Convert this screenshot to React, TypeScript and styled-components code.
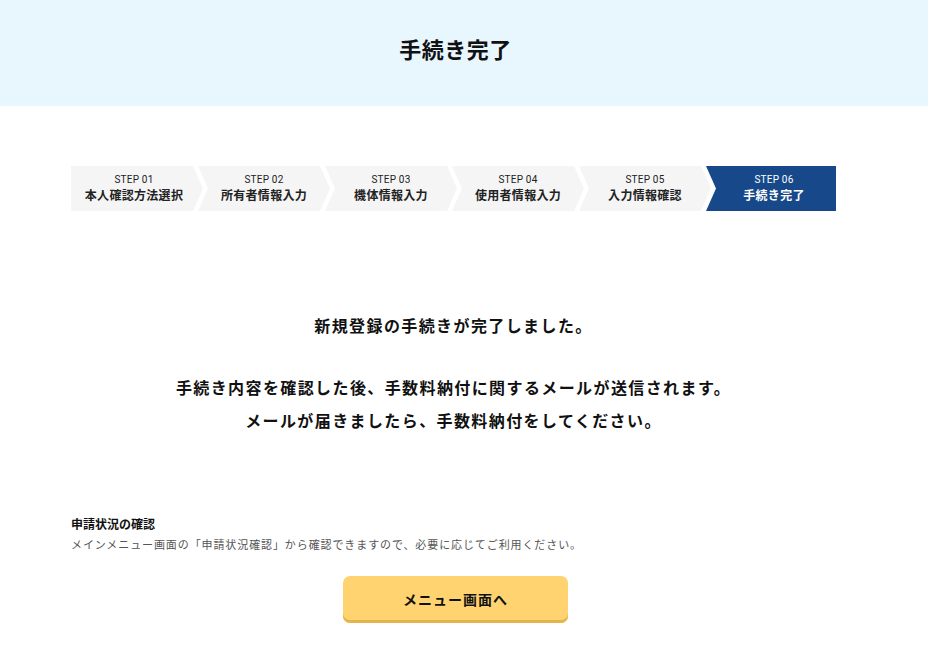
import React from "react";
import styled, { createGlobalStyle } from "styled-components";

const Global = createGlobalStyle`
  html, body { margin: 0; padding: 0; background: #fff; }
  body { font-family: "Noto Sans CJK JP", "Noto Sans", sans-serif; color: #222; }
`;

const Page = styled.div`
  width: 928px;
  display: flex;
  flex-direction: column;
`;

const Header = styled.header`
  height: 106px;
  background: #e8f6fe;
  display: flex;
  align-items: center;
  justify-content: center;
  padding: 0 17px 10px 0;
  box-sizing: border-box;
`;

const Title = styled.h1`
  margin: 0;
  font-size: 22px;
  font-weight: 700;
  letter-spacing: 0.5px;
  color: #111;
`;

const Main = styled.main`
  width: 911px;
  padding: 60px 75px 0 71px;
  box-sizing: border-box;
  display: flex;
  flex-direction: column;
`;

const Steps = styled.ol`
  list-style: none;
  margin: 0;
  padding: 0;
  display: flex;
  height: 45px;
`;

const Step = styled.li<{ $first?: boolean; $last?: boolean; $active?: boolean }>`
  flex: 0 0 ${(p) => (p.$last ? "130px" : "132px")};
  margin-left: ${(p) => (p.$first ? "0" : "-5px")};
  background: ${(p) => (p.$active ? "#16488a" : "#f5f5f5")};
  color: ${(p) => (p.$active ? "#fff" : "#222")};
  clip-path: ${(p) =>
    p.$first
      ? "polygon(0 0, calc(100% - 10px) 0, 100% 50%, calc(100% - 10px) 100%, 0 100%)"
      : p.$last
      ? "polygon(0 0, 100% 0, 100% 100%, 0 100%, 10px 50%)"
      : "polygon(0 0, calc(100% - 10px) 0, 100% 50%, calc(100% - 10px) 100%, 0 100%, 10px 50%)"};
  display: flex;
  flex-direction: column;
  align-items: center;
  justify-content: center;
  padding-left: ${(p) => (p.$first ? "0" : "6px")};
  padding-right: ${(p) => (p.$last ? "0" : "6px")};
  box-sizing: border-box;
`;

const StepNo = styled.span`
  font-family: Roboto, "Liberation Sans", sans-serif;
  font-size: 10px;
  line-height: 13px;
  letter-spacing: 0.2px;
`;

const StepLabel = styled.span`
  font-size: 12px;
  font-weight: 700;
  line-height: 18px;
  letter-spacing: 0.3px;
`;

const Message = styled.div`
  margin-top: 98px;
  text-align: center;
  font-size: 16px;
  font-weight: 700;
  letter-spacing: 1.4px;
  color: #111;
`;

const Line = styled.p<{ $gap?: number }>`
  margin: ${(p) => p.$gap ?? 0}px 0 0;
  line-height: 33px;
`;

const Notice = styled.section`
  margin-top: 78px;
  display: flex;
  flex-direction: column;
  gap: 4px;
`;

const NoticeTitle = styled.h2`
  margin: 0;
  font-size: 12px;
  font-weight: 700;
  line-height: 17px;
  color: #111;
`;

const NoticeText = styled.p`
  margin: 0;
  font-size: 11px;
  letter-spacing: 0.9px;
  line-height: 16px;
  color: #555;
`;

const ButtonRow = styled.div`
  margin-top: 24px;
  display: flex;
  justify-content: center;
  padding-left: 4px;
`;

const MenuButton = styled.button`
  width: 225px;
  height: 47px;
  border: none;
  border-radius: 7px;
  background: #ffd470;
  box-shadow: inset 0 -3px 0 #e5b54c;
  font-family: "Noto Sans CJK JP", sans-serif;
  font-size: 14px;
  font-weight: 700;
  letter-spacing: 1px;
  color: #111;
  padding-bottom: 2px;
  cursor: pointer;
`;

const steps = [
  "本人確認方法選択",
  "所有者情報入力",
  "機体情報入力",
  "使用者情報入力",
  "入力情報確認",
  "手続き完了",
];

export default function App() {
  return (
    <Page>
      <Global />
      <Header>
        <Title>手続き完了</Title>
      </Header>
      <Main>
        <Steps>
          {steps.map((s, i) => (
            <Step key={s} $first={i === 0} $last={i === steps.length - 1} $active={i === steps.length - 1}>
              <StepNo>STEP 0{i + 1}</StepNo>
              <StepLabel>{s}</StepLabel>
            </Step>
          ))}
        </Steps>
        <Message>
          <Line>新規登録の手続きが完了しました。</Line>
          <Line $gap={29}>手続き内容を確認した後、手数料納付に関するメールが送信されます。</Line>
          <Line>メールが届きましたら、手数料納付をしてください。</Line>
        </Message>
        <Notice>
          <NoticeTitle>申請状況の確認</NoticeTitle>
          <NoticeText>メインメニュー画面の「申請状況確認」から確認できますので、必要に応じてご利用ください。</NoticeText>
        </Notice>
        <ButtonRow>
          <MenuButton>メニュー画面へ</MenuButton>
        </ButtonRow>
      </Main>
    </Page>
  );
}
